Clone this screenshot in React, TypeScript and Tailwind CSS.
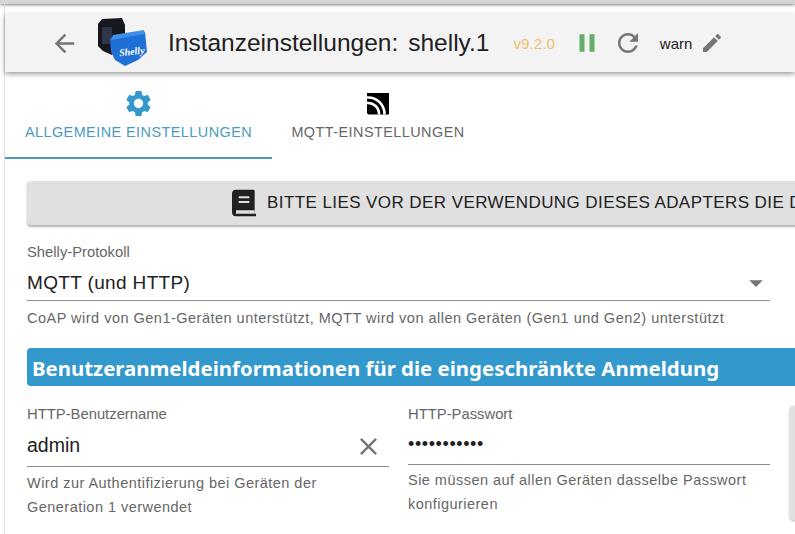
const sans = "font-['Liberation_Sans',Arial,sans-serif]";

function Logo() {
  return (
    <svg width="52" height="50" viewBox="0 0 52 50" className="shrink-0">
      <path d="M1 6 L5 1 L25 0 L28 7 L28 16 L15 20 L15 37 L6 33 L1 28 Z" fill="#16181d" />
      <rect x="5" y="9" width="10" height="17" fill="#2c3646" />
      <path d="M13 20 L48 14 L50 34 L41 42 L28 48 L18 42 L14 34 Z" fill="#1e6fd6" />
      <path d="M16 17 L47 12 L48 16 L14 22 Z" fill="#3f8fe8" />
      <text x="22" y="37" fill="#ffffff" fontSize="10" fontStyle="italic" fontWeight="700" fontFamily="'Liberation Serif', serif" transform="rotate(-6 34 34)">Shelly</text>
    </svg>
  );
}

export default function App() {
  return (
    <div className={`w-[795px] h-[534px] overflow-hidden bg-white flex flex-col ${sans}`}>
      <div className="h-[4px] shrink-0 bg-[#d5d5d5] shadow-[0_1px_3px_rgba(0,0,0,0.5)]" />
      <div className="flex-1 min-h-0 ml-[4px] pt-[10px] border-l border-[#dddddd] flex flex-col">
        <header className="h-[58px] shrink-0 bg-[#f3f3f3] flex items-center pl-[45px] shadow-[0_2px_5px_rgba(0,0,0,0.4)] relative">
          <svg width="29" height="29" viewBox="0 0 24 24" fill="#757575" className="shrink-0"><path d="M20 11H7.830l5.590-5.590L12 4l-8 8 8 8 1.410-1.410L7.830 13H20v-2z" /></svg>
          <div className="ml-[18px]"><Logo /></div>
          <h1 className="ml-[19px] text-[24.5px] font-normal text-[#212121] whitespace-nowrap">Instanzeinstellungen:<span className="ml-[10px]">shelly.1</span></h1>
          <span className="ml-[24px] mt-[2px] text-[15.200px] text-[#efc070]">v9.2.0</span>
          <svg width="30" height="30" viewBox="0 0 24 24" fill="#66ad6a" className="ml-[17px] shrink-0"><path d="M6 19h4V5H6v14zm8-14v14h4V5h-4z" /></svg>
          <svg width="30" height="30" viewBox="0 0 24 24" fill="#757575" className="ml-[11px] shrink-0"><path d="M17.650 6.350C16.200 4.900 14.210 4 12 4c-4.420 0-7.990 3.580-7.990 8s3.570 8 7.990 8c3.730 0 6.840-2.550 7.730-6h-2.080c-.82 2.330-3.040 4-5.650 4-3.310 0-6-2.690-6-6s2.690-6 6-6c1.660 0 3.140.69 4.220 1.780L13 11h7V4l-2.350 2.350z" /></svg>
          <span className="ml-[17px] mt-[2px] text-[15px] text-[#212121]">warn</span>
          <svg width="24" height="24" viewBox="0 0 24 24" fill="#757575" className="ml-[8px] shrink-0"><path d="M3 17.250V21h3.750L17.810 9.940l-3.750-3.750L3 17.250zM20.710 7.040a.996.996 0 0 0 0-1.410l-2.340-2.340a.996.996 0 0 0-1.410 0l-1.830 1.830 3.750 3.750 1.830-1.830z" /></svg>
        </header>

        <nav className="flex h-[87px] shrink-0">
          <div className="w-[267px] h-[87px] flex flex-col items-center pt-[16px] border-b-2 border-[#4a9bbd] text-[#4a9bbd]">
            <svg width="31" height="31" viewBox="0 0 24 24" fill="#3399cc"><path d="M19.140 12.940c.04-.3.06-.61.06-.94 0-.32-.02-.64-.07-.94l2.030-1.580c.18-.14.23-.41.12-.61l-1.920-3.320c-.12-.22-.37-.29-.59-.22l-2.390.96c-.5-.38-1.030-.7-1.620-.94l-.36-2.540c-.04-.24-.24-.41-.48-.41h-3.840c-.24 0-.43.17-.47.41l-.36 2.540c-.59.24-1.130.57-1.620.94l-2.390-.96c-.22-.08-.47 0-.59.22L2.740 8.870c-.12.21-.08.47.12.61l2.030 1.580c-.05.3-.09.63-.09.94s.02.64.07.94l-2.030 1.580c-.18.14-.23.41-.12.61l1.920 3.320c.12.22.37.29.59.22l2.390-.96c.5.38 1.030.7 1.620.94l.36 2.540c.05.24.24.41.48.41h3.840c.24 0 .44-.17.47-.41l.36-2.540c.59-.24 1.130-.56 1.620-.94l2.390.96c.22.08.47 0 .59-.22l1.920-3.320c.12-.22.07-.47-.12-.61l-2.010-1.580zM12 15.600c-1.980 0-3.600-1.620-3.600-3.600s1.620-3.600 3.600-3.600 3.600 1.620 3.600 3.600-1.620 3.600-3.600 3.600z" /></svg>
            <span className="text-[14.400px] leading-[16px] tracking-[0.47px] mt-[5px]">ALLGEMEINE EINSTELLUNGEN</span>
          </div>
          <div className="w-[212px] flex flex-col items-center pt-[16px] text-[#666666]">
            <svg width="24" height="31" viewBox="0 0 24 31">
              <path d="M1 5h22v21.500H3a2 2 0 0 1-2-2z" fill="#000000" />
              <path d="M1 9.500A16.500 16.500 0 0 1 18.500 26.500M1 15A11 11 0 0 1 13 26.500" fill="none" stroke="#ffffff" strokeWidth="2.600" />
            </svg>
            <span className="text-[14.400px] leading-[16px] tracking-[0.47px] mt-[5px]">MQTT-EINSTELLUNGEN</span>
          </div>
        </nav>

        <main className="pl-[22px] pt-[22px] flex-1 min-h-0 w-[1000px]">
          <div className="h-[44px] w-[900px] rounded bg-[#e0e0e0] shadow-[0_2px_2px_rgba(0,0,0,0.3)] flex items-center pl-[201px] gap-[7px] text-[17px] tracking-[0.42px] text-[#212121] whitespace-nowrap">
            <svg width="32" height="32" viewBox="0 0 24 24" fill="#212121" className="shrink-0"><path d="M6 2h13a1 1 0 0 1 1 1v17h1v2H6a3 3 0 0 1-3-3V5a3 3 0 0 1 3-3z" /><path d="M8 7h8v1.500H8zM8 10.500h8V12H8zM6 17.500h14V20H6z" fill="#e0e0e0" /></svg>
            <span>BITTE LIES VOR DER VERWENDUNG DIESES ADAPTERS DIE DOKUMENTATION</span>
          </div>

          <div className="w-[743px] mt-[19px]">
            <div className="text-[14.800px] leading-[16px] text-[#666666]">Shelly-Protokoll</div>
            <div className="flex items-center justify-between h-[41px] border-b border-[#8c8c8c] text-[19px] tracking-[0.35px] text-[#212121] pt-[6px]">
              <span>MQTT (und HTTP)</span>
              <svg width="32" height="32" viewBox="0 0 24 24" fill="#757575" className="-mr-[2px]"><path d="M7 10l5 5 5-5z" /></svg>
            </div>
            <div className="mt-[8px] text-[14.500px] leading-[18px] tracking-[0.49px] text-[#666666]">CoAP wird von Gen1-Geräten unterstützt, MQTT wird von allen Geräten (Gen1 und Gen2) unterstützt</div>
          </div>

          <div className="mt-[21px] h-[38px] w-[900px] rounded-l bg-[#3399cc] pl-[5px] pt-[3px] flex items-center text-white text-[20.400px] font-bold font-['Noto_Sans',sans-serif] whitespace-nowrap">Benutzeranmeldeinformationen für die eingeschränkte Anmeldung</div>

          <div className="flex mt-[20px]">
            <div className="w-[362px]">
              <div className="text-[14.800px] leading-[16px] text-[#666666]">HTTP-Benutzername</div>
              <div className="flex items-center justify-between h-[45px] border-b border-[#8c8c8c] text-[19.500px] text-[#212121] pt-[4px] pr-[6px]">
                <span>admin</span>
                <svg width="29" height="29" viewBox="0 0 24 24" fill="#757575"><path d="M19 6.410 17.590 5 12 10.590 6.410 5 5 6.410 10.590 12 5 17.590 6.410 19 12 13.410 17.590 19 19 17.590 13.410 12z" /></svg>
              </div>
              <div className="mt-[4px] text-[14.500px] leading-[24px] tracking-[0.47px] text-[#666666]">Wird zur Authentifizierung bei Geräten der<br />Generation 1 verwendet</div>
            </div>
            <div className="w-[362px] ml-[19px]">
              <div className="text-[14.800px] leading-[16px] text-[#666666]">HTTP-Passwort</div>
              <div className="flex items-center h-[43px] border-b border-[#8c8c8c] text-[#212121] pt-[3px]">
                <span className="text-[18px] tracking-[0.6px]">•••••••••••</span>
              </div>
              <div className="mt-[3px] text-[14.500px] leading-[24px] tracking-[0.47px] text-[#666666]">Sie müssen auf allen Geräten dasselbe Passwort<br />konfigurieren</div>
            </div>
            <div className="ml-[20px] w-[100px] h-[114px] rounded bg-[#e0e0e0] shadow-[0_1px_3px_rgba(0,0,0,0.3)]" />
          </div>
        </main>
      </div>
    </div>
  );
}
